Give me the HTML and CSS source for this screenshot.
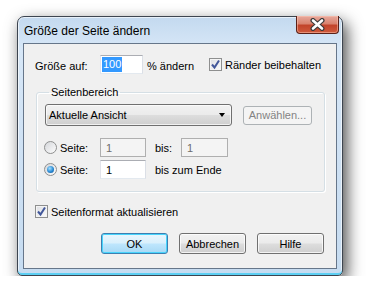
FILE: index.html
```html
<!DOCTYPE html>
<html lang="de">
<head>
  <meta charset="UTF-8">
  <title>Größe der Seite ändern</title>
  <link rel="stylesheet" href="styles.css">
</head>
<body>

  <!-- Dialog window -->
  <div class="window">
    <div class="titlebar">
      <span class="title">Größe der Seite ändern</span>
      <div class="close">
        <svg width="17" height="13" viewBox="0 0 17 13">
          <path d="M4 2.5 L13 10.5 M13 2.5 L4 10.5" stroke="#3b3b3b" stroke-width="5" stroke-linecap="round"/>
          <path d="M4 2.5 L13 10.5 M13 2.5 L4 10.5" stroke="#ffffff" stroke-width="2.6" stroke-linecap="round"/>
        </svg>
      </div>
    </div>

    <div class="client">
      <div class="row size-row">
        <span class="lbl">Größe auf:</span>
        <div class="field field-size"><span class="sel">100</span></div>
        <span class="unit">% ändern</span>
        <div class="check">
          <span class="box">
            <svg width="11" height="11" viewBox="0 0 11 11"><path d="M2 5.5 L4.5 8.5 L9 1.5" fill="none" stroke="#42579a" stroke-width="2"/></svg>
          </span>
          <span>Ränder beibehalten</span>
        </div>
      </div>

      <fieldset class="group">
        <legend>Seitenbereich</legend>
        <div class="row combo-row">
          <div class="combo">Aktuelle Ansicht<span class="arrow"></span></div>
          <div class="btn btn-disabled">Anwählen...</div>
        </div>
        <div class="row page-row">
          <span class="radio"></span>
          <span class="rlbl">Seite:</span>
          <div class="field field-page disabled">1</div>
          <span class="bis">bis:</span>
          <div class="field field-page disabled">1</div>
        </div>
        <div class="row page-row">
          <span class="radio on"></span>
          <span class="rlbl">Seite:</span>
          <div class="field field-page">1</div>
          <span class="bis">bis zum Ende</span>
        </div>
      </fieldset>

      <div class="check format-check">
        <span class="box">
          <svg width="11" height="11" viewBox="0 0 11 11"><path d="M2 5.5 L4.5 8.5 L9 1.5" fill="none" stroke="#42579a" stroke-width="2"/></svg>
        </span>
        <span>Seitenformat aktualisieren</span>
      </div>

      <div class="buttons">
        <div class="btn btn-default">OK</div>
        <div class="btn">Abbrechen</div>
        <div class="btn">Hilfe</div>
      </div>
    </div>
  </div>

</body>
</html>
```

FILE: styles.css
```css
* {
  box-sizing: border-box;
}
body {
  margin: 0;
  background: #fff;
  font-family: 'Liberation Sans', Arial, sans-serif;
  font-size: 11px;
  color: #000;
}
.window {
  margin: 16px 0 0 17px;
  width: 326px;
  height: 260px;
  border: 1px solid #3d4550;
  border-radius: 7px 7px 5px 5px;
  background: linear-gradient(#c3d9ef, #d7e7f7 12%, #cde0f3 60%, #c6dcf1);
  box-shadow: 4px 6px 16px rgba(0, 0, 0, 0.7), inset 0 -2px 0 #5ccff3, inset 0 0 0 1px rgba(255, 255, 255, 0.6);
}
.titlebar {
  height: 26px;
  display: flex;
  align-items: center;
  padding-left: 6px;
}
.title {
  font-size: 12px;
  margin-top: 1px;
}
.close {
  margin-left: auto;
  margin-right: 3px;
  align-self: flex-start;
  margin-top: -1px;
  width: 43px;
  height: 18px;
  border: 1px solid #5a2118;
  border-top: none;
  border-radius: 0 0 4px 4px;
  background: linear-gradient(#e7a99d, #d9836f 45%, #c2442b 55%, #cf5a3c);
  box-shadow: inset 0 0 0 1px rgba(255, 200, 180, 0.5);
  display: flex;
  align-items: center;
  justify-content: center;
}
.client {
  margin: 0 5px;
  height: 226px;
  border: 1px solid #66768a;
  background: #f0f0f0;
}
.row {
  display: flex;
  align-items: center;
}
.size-row {
  margin-top: 11px;
  padding-left: 11px;
  height: 19px;
}
.lbl {
  width: 65px;
  padding-top: 2px;
}
.field {
  height: 19px;
  background: #fff;
  border: 1px solid #abadb3;
  border-color: #abadb3 #dbdfe6 #e3e9ef #e2e3ea;
  display: flex;
  align-items: center;
}
.field-size {
  width: 43px;
  padding-left: 1px;
}
.sel {
  background: #3399ff;
  color: #fff;
  padding: 1px 1px;
  line-height: 13px;
}
.unit {
  margin-left: 4px;
  width: 62px;
  padding-top: 2px;
}
.check {
  display: flex;
  align-items: center;
  gap: 3px;
}
.box {
  width: 13px;
  height: 13px;
  border: 1px solid #8e8f8f;
  background: linear-gradient(135deg, #dcdee3, #fbfbfb);
  box-shadow: inset 0 0 0 1px #f4f4f4;
  display: flex;
  align-items: center;
  justify-content: center;
}
.group {
  margin: 12px 0 0 12px;
  width: 289px;
  padding: 5px 0 12px 8px;
  border: 1px solid #d5dfe5;
  border-radius: 3px;
  box-shadow: inset 1px 1px 0 #fff, 1px 1px 0 #fff;
}
.group legend {
  padding: 0 2px;
  margin-left: 4px;
  line-height: 13px;
}
.combo {
  width: 187px;
  height: 22px;
  border: 1px solid #707070;
  border-radius: 3px;
  background: linear-gradient(#f2f2f2, #ebebeb 48%, #dddddd 52%, #cfcfcf);
  box-shadow: inset 0 0 0 1px rgba(255, 255, 255, 0.7);
  display: flex;
  align-items: center;
  padding-left: 3px;
  padding-right: 6px;
}
.arrow {
  margin-left: auto;
  border-left: 3.5px solid transparent;
  border-right: 3.5px solid transparent;
  border-top: 4px solid #000;
}
.btn {
  width: 67px;
  height: 21px;
  border: 1px solid #707070;
  border-radius: 3px;
  background: linear-gradient(#f2f2f2, #ebebeb 48%, #dddddd 52%, #cfcfcf);
  box-shadow: inset 0 0 0 1px rgba(255, 255, 255, 0.75);
  display: flex;
  align-items: center;
  justify-content: center;
}
.btn-disabled {
  width: 69px;
  height: 19px;
  margin-left: 11px;
  border-color: #adb2b5;
  background: #f4f4f4;
  box-shadow: none;
  color: #838383;
}
.btn-default {
  border-color: #3c7fb1;
  background: linear-gradient(#eaf6fd, #d9f0fc 48%, #bee6fd 52%, #a7d9f5);
  box-shadow: inset 0 0 0 1px #48d4fc;
}
.page-row {
  margin-left: -1px;
  height: 19px;
}
.combo-row + .page-row {
  margin-top: 12px;
}
.page-row + .page-row {
  margin-top: 3px;
}
.radio {
  width: 13px;
  height: 13px;
  border-radius: 50%;
  border: 1px solid #8e8f8f;
  background: linear-gradient(135deg, #d4d6da, #fdfdfd);
  display: flex;
  align-items: center;
  justify-content: center;
}
.radio.on::after {
  content: "";
  width: 7px;
  height: 7px;
  border-radius: 50%;
  background: radial-gradient(circle at 40% 35%, #a6e1ff, #2a8ad4 55%, #0d4f8f);
}
.rlbl {
  margin-left: 3px;
  width: 40px;
  padding-top: 1px;
}
.field-page {
  width: 46px;
  padding-left: 5px;
}
.field-page.disabled {
  background: #f4f4f4;
  border-color: #afafaf;
  color: #6d6d6d;
}
.field-page.disabled:last-child {
  width: 47px;
}
.bis {
  margin-left: 9px;
  width: 26px;
  white-space: nowrap;
  padding-top: 1px;
}
.format-check {
  margin: 13px 0 0 11px;
}
.buttons {
  margin-top: 15px;
  display: flex;
  justify-content: flex-end;
  gap: 11px;
  padding-right: 12px;
}
```
